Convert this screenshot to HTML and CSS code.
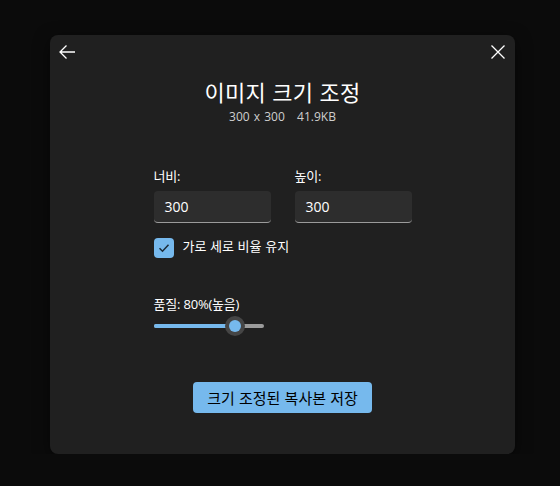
FILE: index.html
```html
<!DOCTYPE html>
<html lang="ko">
<head>
<meta charset="utf-8">
<link rel="stylesheet" href="styles.css">
</head>
<body>
<div class="dialog">
  <div class="header">
    <svg class="icon" width="18" height="16" viewBox="0 0 18 16"><path d="M17 8H2M8.5 1.5L2 8l6.5 6.5" fill="none" stroke="#fff" stroke-width="1.3"/></svg>
    <svg class="icon" width="16" height="16" viewBox="0 0 16 16"><path d="M1.5 1.5l13 13M14.5 1.5l-13 13" fill="none" stroke="#fff" stroke-width="1.3"/></svg>
  </div>
  <h1 class="title">이미지 크기 조정</h1>
  <div class="subtitle">300 x 300&nbsp;&nbsp;&nbsp;41.9KB</div>
  <div class="form">
    <div class="fields">
      <div class="field">
        <label class="label">너비:</label>
        <div class="input">300</div>
      </div>
      <div class="field">
        <label class="label">높이:</label>
        <div class="input">300</div>
      </div>
    </div>
    <div class="check-row">
      <span class="checkbox"><svg width="12" height="10" viewBox="0 0 12 10"><path d="M1.5 5.2l3 3 6-6.5" fill="none" stroke="#1b2b38" stroke-width="1.5"/></svg></span>
      <span class="check-label">가로 세로 비율 유지</span>
    </div>
    <div class="label quality">품질: 80%(높음)</div>
    <div class="slider">
      <div class="track"><div class="fill" style="width:74%"></div></div>
      <div class="thumb" style="left:74%"><span class="thumb-inner"></span></div>
    </div>
  </div>
  <div class="actions">
    <button class="primary">크기 조정된 복사본 저장</button>
  </div>
</div>
</body>
</html>
```
FILE: styles.css
```css
html, body {
  margin: 0;
  padding: 0;
  background: #0b0b0b;
  font-family: "Segoe UI", "Noto Sans", "Noto Sans CJK KR", sans-serif;
  color: #fff;
}
.dialog {
  margin: 35px 0 0 50px;
  width: 465px;
  height: 419px;
  background: #202020;
  border-radius: 8px;
  box-shadow: 0 4px 16px rgba(0,0,0,0.5);
  display: flex;
  flex-direction: column;
  box-sizing: border-box;
}
.header {
  height: 34px;
  display: flex;
  align-items: center;
  justify-content: space-between;
  padding: 0 9px 0 8px;
}
.icon { display: block; }
.title {
  margin: 7px 0 0;
  font-weight: 400;
  font-size: 22px;
  line-height: 30px;
  text-align: center;
  font-family: "Noto Sans CJK KR", sans-serif;
  letter-spacing: 0.2px;
}
.subtitle {
  margin-top: 3px;
  font-size: 12px;
  line-height: 16px;
  text-align: center;
  color: #cfcfcf;
  font-family: "Open Sans", "Noto Sans CJK KR", sans-serif;
  word-spacing: 1px;
}
.form {
  width: 258px;
  margin: 42px auto 0;
}
.fields {
  display: flex;
  gap: 24px;
}
.field { width: 117px; }
.label {
  display: block;
  font-size: 13px;
  line-height: 18px;
  font-family: "Open Sans", "Noto Sans CJK KR", sans-serif;
  letter-spacing: -0.2px;
}
.input {
  margin-top: 6px;
  height: 32px;
  box-sizing: border-box;
  background: #2d2d2d;
  border-radius: 4px;
  border-bottom: 1px solid #9b9b9b;
  padding: 0 11px;
  font-size: 14px;
  line-height: 31px;
  font-family: "Open Sans", sans-serif;
}
.check-row {
  margin-top: 15px;
  display: flex;
  align-items: center;
  gap: 9px;
  height: 20px;
}
.checkbox {
  width: 20px;
  height: 20px;
  border-radius: 4px;
  background: #76b9ed;
  display: flex;
  align-items: center;
  justify-content: center;
}
.check-label {
  font-size: 13px;
  line-height: 18px;
  font-family: "Noto Sans CJK KR", sans-serif;
  margin-top: -4px;
}
.quality { margin-top: 37px; }
.slider {
  position: relative;
  margin-top: 3px;
  width: 110px;
  height: 20px;
  display: flex;
  align-items: center;
}
.track {
  width: 100%;
  height: 4px;
  border-radius: 2px;
  background: #9b9b9b;
  overflow: hidden;
}
.fill { height: 100%; background: #76b9ed; }
.thumb {
  position: absolute;
  top: 0;
  width: 20px;
  height: 20px;
  margin-left: -10px;
  border-radius: 50%;
  background: #454545;
  display: flex;
  align-items: center;
  justify-content: center;
}
.thumb-inner {
  width: 12px;
  height: 12px;
  border-radius: 50%;
  background: #76b9ed;
}
.actions {
  margin-top: 46px;
  display: flex;
  justify-content: center;
}
.primary {
  width: 179px;
  height: 31px;
  border: none;
  border-radius: 4px;
  background: #76b9ed;
  color: #000;
  font-size: 15px;
  font-family: "Noto Sans CJK KR", sans-serif;
  padding: 0;
}
```
